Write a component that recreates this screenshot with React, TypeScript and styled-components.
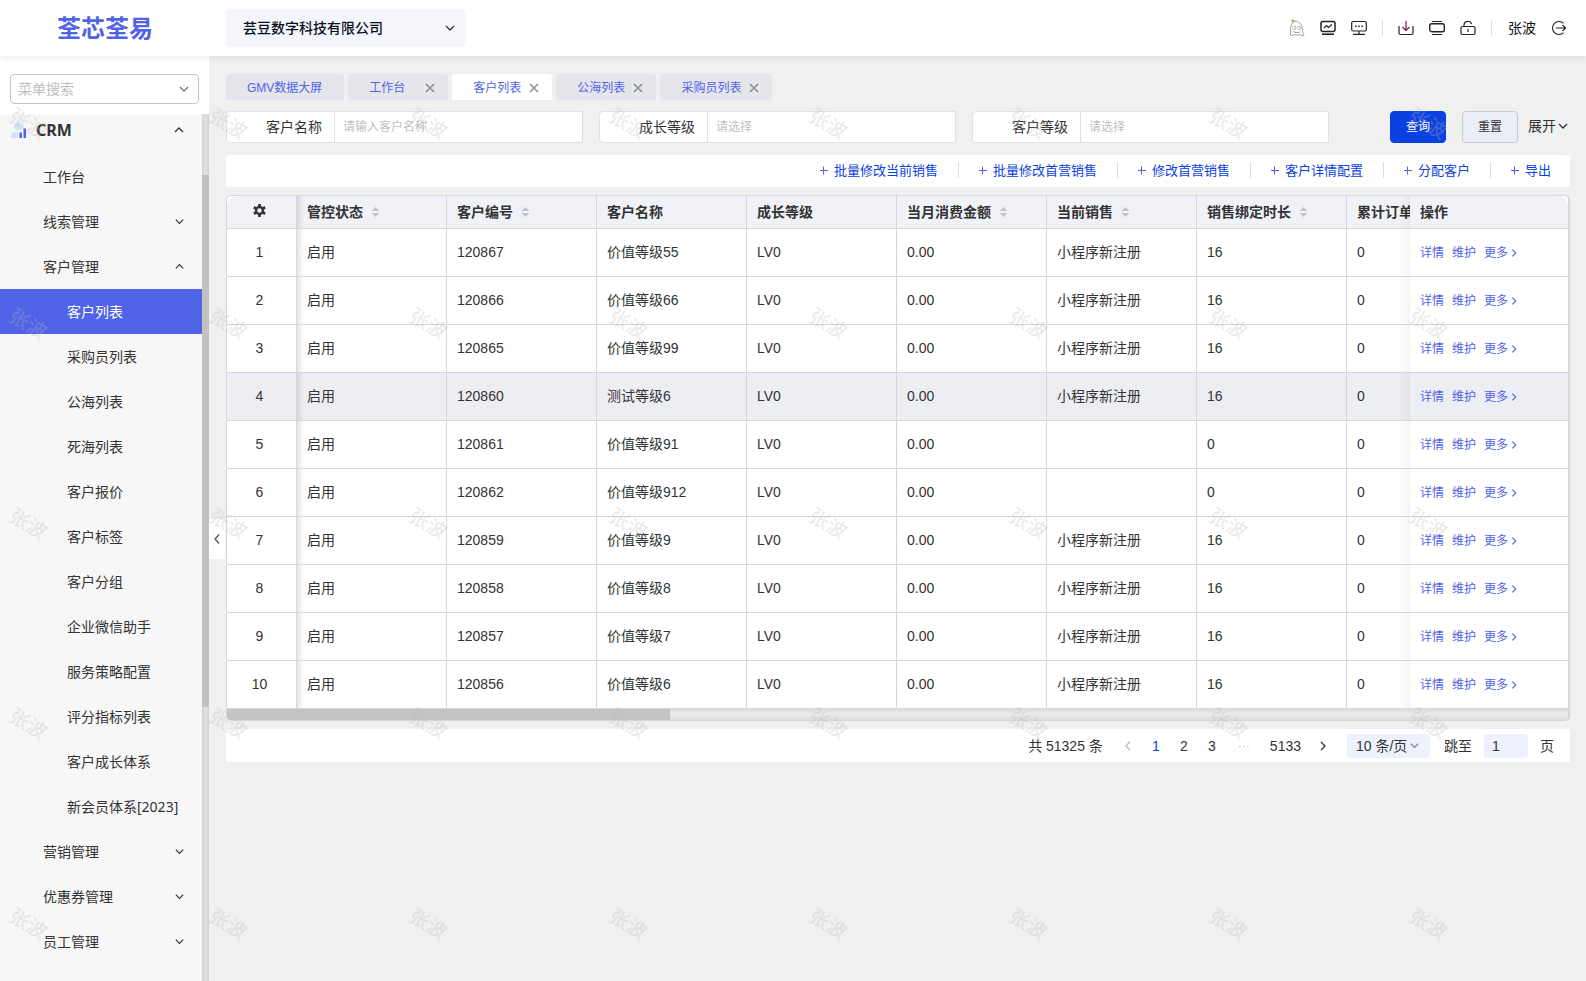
import React from 'react';
import styled, { createGlobalStyle, css } from 'styled-components';

const latin = '"Liberation Sans", "Noto Sans CJK SC", sans-serif';
const ui = '"Noto Sans", "Noto Sans CJK SC", sans-serif';
const brand = '#5062e8';
const link = '#0a42e0';
const line = '#d6d5e2';
const ink = '#333333';

const Global = createGlobalStyle`
  *, *::before, *::after { box-sizing: border-box; }
  body { margin: 0; background: #f0f0f0; color: ${ink}; font: 14px/20px ${ui}; }
  button, input, select { font: inherit; color: inherit; }
  button { border: 0; padding: 0; background: none; cursor: pointer; }
  a { text-decoration: none; color: inherit; }
`;

const Page = styled.div`
  height: 100vh;
  display: flex;
  flex-direction: column;
  overflow: hidden;
`;

/* ---------- header ---------- */
const Header = styled.header`
  flex: none;
  height: 56px;
  display: flex;
  align-items: center;
  background: #fff;
  box-shadow: 0 2px 8px rgba(0, 0, 0, 0.08);
  z-index: 2;
  padding-right: 19px;
`;
const Logo = styled.a`
  width: 226px;
  padding-left: 57px;
  font-size: 24px;
  line-height: 32px;
  font-weight: 700;
  color: ${brand};
`;
const SelectWrap = styled.div`
  position: relative;
  display: flex;
  align-items: center;
  svg { position: absolute; pointer-events: none; }
`;
const CompanyWrap = styled(SelectWrap)`
  width: 240px;
  svg { right: 10px; }
`;
const CompanySelect = styled.select`
  appearance: none;
  width: 100%;
  height: 38px;
  border: 0;
  border-radius: 4px;
  background: #f5f6fb;
  padding: 0 32px 0 17px;
  font-weight: 500;
  color: #0a0f1e;
`;
const HeaderTools = styled.div`
  margin-left: auto;
  display: flex;
  align-items: center;
`;
const IconGroup = styled.div`
  display: flex;
  gap: 15px;
  padding: 0 15px;
  &:not(:last-child) { border-right: 1px solid #dcdde8; }
  height: 16px;
  align-items: center;
`;
const IconButton = styled.button`
  width: 16px;
  height: 16px;
  display: flex;
  align-items: center;
  justify-content: center;
`;
const User = styled.div`
  display: flex;
  align-items: center;
  gap: 15px;
  padding-left: 16px;
  color: #111;
`;

/* ---------- sidebar ---------- */
const Body = styled.div`
  flex: 1;
  min-height: 0;
  display: flex;
`;
const Sidebar = styled.aside`
  flex: none;
  width: 209px;
  display: flex;
  flex-direction: column;
  background: #fff;
`;
const MenuSearch = styled(SelectWrap)`
  flex: none;
  height: 58px;
  padding: 18px 10px 10px;
  svg { right: 19px; top: 27px; }
`;
const MenuSelect = styled.select`
  appearance: none;
  width: 100%;
  height: 30px;
  border: 1px solid #c4c4c4;
  border-radius: 4px;
  background: #fff;
  padding: 0 28px 0 7px;
  color: #bcbec4;
`;
const MenuArea = styled.div`
  flex: 1;
  min-height: 0;
  display: flex;
`;
const Menu = styled.nav`
  flex: 1;
  overflow: hidden;
  background: #f7f7f7;
`;
const MenuTrack = styled.div`
  width: 7px;
  padding-top: 61px;
  background: linear-gradient(90deg, #d2d2d2, #e2e2e2 50%, #d2d2d2);
`;
const MenuThumb = styled.div`
  height: 532px;
  background: #c1c1c1;
`;
const GroupTitle = styled.button`
  width: 100%;
  height: 40px;
  display: flex;
  align-items: center;
  gap: 10px;
  padding: 0 17px 8px 10px;
  font-size: 16px;
  font-weight: 700;
  svg:last-child { margin-left: auto; }
`;
const MenuItem = styled.a<{ $level: number; $active?: boolean }>`
  height: 45px;
  display: flex;
  align-items: center;
  justify-content: space-between;
  padding: 0 17px 0 ${p => (p.$level === 2 ? 67 : 43)}px;
  white-space: nowrap;
  ${p => p.$active && css`background: ${brand}; color: #fff;`}
`;

/* ---------- main ---------- */
const Main = styled.main`
  position: relative;
  flex: 1;
  min-width: 0;
  padding: 18px 16px 16px 17px;
`;
const Collapse = styled.button`
  position: absolute;
  left: 0;
  top: 50%;
  width: 16px;
  height: 40px;
  display: flex;
  align-items: center;
  justify-content: center;
  background: #fff;
`;
const Tabs = styled.div`
  display: flex;
  gap: 4px;
  height: 26px;
`;
const Tab = styled.div<{ $active?: boolean; $closable: boolean }>`
  min-width: 100px;
  display: flex;
  align-items: center;
  justify-content: space-between;
  gap: 8px;
  padding: 2px ${p => (p.$closable ? 13 : 22)}px 0 21px;
  border-radius: 4px 4px 0 0;
  background: ${p => (p.$active ? '#fff' : '#e5e6ec')};
  color: ${brand};
  font: 12px/18px ${latin};
  button { display: flex; }
`;

const SearchRow = styled.form`
  display: flex;
  align-items: center;
  gap: 16px;
  margin-top: 11px;
  height: 32px;
`;
const Field = styled.div`
  flex: 1;
  min-width: 0;
  height: 32px;
  display: flex;
  border: 1px solid #e0e0ec;
  border-radius: 4px 0 0 4px;
  background: #fff;
  label {
    flex: none;
    width: 108px;
    padding-right: 12px;
    border-right: 1px solid #e0e0ec;
    text-align: right;
    line-height: 30px;
  }
  input, select {
    appearance: none;
    flex: 1;
    min-width: 0;
    border: 0;
    background: none;
    padding: 0 8px;
    font-size: 12px;
    color: #bfc0c6;
    outline: none;
  }
  input::placeholder { color: #bfc0c6; opacity: 1; }
`;
const Actions = styled.div`
  flex: none;
  width: 225px;
  display: flex;
  align-items: center;
  justify-content: flex-end;
  gap: 16px;
`;
const Button = styled.button<{ $primary?: boolean }>`
  width: 56px;
  height: 32px;
  border-radius: 4px;
  font-size: 12px;
  border: 1px solid ${p => (p.$primary ? '#0a42e0' : '#c9c9cf')};
  background: ${p => (p.$primary ? '#0a42e0' : '#ebeef7')};
  color: ${p => (p.$primary ? '#fff' : ink)};
`;
const Expand = styled.button`
  display: flex;
  align-items: center;
  gap: 1px;
  margin-left: -6px;
  padding: 0 1px 2px 0;
`;

const Toolbar = styled.div`
  display: flex;
  align-items: center;
  justify-content: flex-end;
  height: 32px;
  margin-top: 12px;
  padding-bottom: 2px;
  border-radius: 4px;
  background: #fff;
`;
const ToolItem = styled.button`
  display: flex;
  align-items: center;
  gap: 5px;
  height: 16px;
  padding: 0 20px 0 19px;
  font-size: 13px;
  color: ${link};
  & + & { border-left: 1px solid #dcdde8; }
  &:last-child { padding-right: 19px; }
`;

const TableBox = styled.div`
  margin-top: 8px;
  border: 1px solid ${line};
  border-right-width: 2px;
  border-radius: 5px;
  background: #fff;
  overflow: hidden;
`;
const TableClip = styled.div`
  overflow: hidden;
`;
const Table = styled.table`
  width: 100%;
  min-width: 1428px;
  table-layout: fixed;
  border-collapse: separate;
  border-spacing: 0;
  font-family: ${latin};
  th, td {
    padding: 0 10px;
    border-right: 1px solid ${line};
    border-bottom: 1px solid ${line};
    text-align: left;
    white-space: nowrap;
    overflow: hidden;
  }
  th {
    height: 33px;
    background: #f0f2f8;
    font-weight: 700;
  }
  td { height: 48px; padding-bottom: 2px; background: #fff; }
  th:first-child { border-top-left-radius: 10px; }
  th:last-child { border-top-right-radius: 10px; }
  th:first-child, td:first-child { text-align: center; padding-left: 0; padding-right: 4px; }
  th:nth-child(2), td:nth-child(2) {
    background-image: linear-gradient(90deg, rgba(0, 0, 0, 0.1), rgba(0, 0, 0, 0) 7px);
  }
  th:last-child, td:last-child {
    position: sticky;
    right: 0;
    border-right: 0;
    overflow: visible;
  }
  td:last-child { padding-bottom: 0; }
  th:last-child::before, td:last-child::before {
    content: '';
    position: absolute;
    top: 0;
    bottom: 0;
    left: -12px;
    width: 12px;
    background: linear-gradient(270deg, rgba(0, 0, 0, 0.04), rgba(0, 0, 0, 0));
  }
`;
const Row = styled.tr<{ $hover?: boolean }>`
  ${p => p.$hover && css`td { background-color: #edeef4; }`}
`;
const HeadLabel = styled.span`
  display: flex;
  align-items: center;
  gap: 8px;
`;
const RowLinks = styled.div`
  display: flex;
  gap: 8px;
  font: 12px/20px ${ui};
  color: ${brand};
  a { display: flex; align-items: center; gap: 1px; }
`;
const ScrollTrack = styled.div`
  height: 11px;
  background: linear-gradient(#dcdce0, #ececec 50%, #dcdce0);
`;
const ScrollThumb = styled.div`
  width: 33%;
  height: 11px;
  background: #c4c4c4;
`;

const Pager = styled.div`
  display: flex;
  align-items: center;
  justify-content: flex-end;
  gap: 4px;
  height: 33px;
  margin-top: 8px;
  padding-right: 16px;
  background: #fff;
  font-family: ${latin};
`;
const Total = styled.span`
  margin-right: 9px;
`;
const PageButton = styled.button<{ $current?: boolean }>`
  min-width: 24px;
  height: 24px;
  padding: 0 6px;
  display: flex;
  align-items: center;
  justify-content: center;
  color: ${p => (p.$current ? link : ink)};
`;
const Dots = styled.span`
  width: 32px;
  text-align: center;
  color: #c4c4c4;
  font-size: 12px;
`;
const SizeWrap = styled(SelectWrap)`
  width: 83px;
  margin: 0 10px 0 8px;
  svg { right: 10px; }
`;
const SizeSelect = styled.select`
  appearance: none;
  width: 100%;
  height: 24px;
  border: 0;
  border-radius: 4px;
  background: #edf1fe;
  padding: 0 0 0 9px;
`;
const Jump = styled.label`
  display: flex;
  align-items: center;
  gap: 12px;
`;
const JumpInput = styled.input`
  width: 44px;
  height: 24px;
  border: 0;
  border-radius: 4px;
  background: #edf1fe;
  padding: 0 10px 0 8px;
`;

/* ---------- watermark ---------- */
const Watermark = styled.div`
  position: fixed;
  inset: 0;
  z-index: 10;
  overflow: hidden;
  pointer-events: none;
  display: grid;
  grid-template-columns: repeat(8, 200px);
  grid-auto-rows: 200px;
`;
const Mark = styled.span`
  padding: 110px 0 0 8px;
  span {
    display: block;
    width: 40px;
    font-size: 20px;
    line-height: 28px;
    font-weight: 500;
    transform: rotate(30deg);
    color: rgba(184, 184, 184, 0.28);
  }
`;

/* ---------- icons ---------- */
type Dir = 'up' | 'down' | 'left' | 'right';
const paths: Record<Dir, string> = {
  down: 'M2 4 6 8 10 4',
  up: 'M2 8 6 4 10 8',
  left: 'M8 1.5 4 6 8 10.5',
  right: 'M4 2 8 6 4 10',
};
const Chevron = ({ dir, size = 12, color = '#333' }: { dir: Dir; size?: number; color?: string }) => (
  <svg width={size} height={size} viewBox="0 0 12 12" fill="none" stroke={color} strokeWidth="1.3" aria-hidden="true">
    <path d={paths[dir]} />
  </svg>
);
const Close = () => (
  <svg width="10" height="10" viewBox="0 0 10 10" stroke="#8c8c90" strokeWidth="1.5" aria-hidden="true">
    <path d="M1 1 9 9M9 1 1 9" />
  </svg>
);
const Plus = () => (
  <svg width="10" height="10" viewBox="0 0 10 10" stroke={brand} strokeWidth="1" aria-hidden="true">
    <path d="M1 5.5H9M4.5 1.5V9.5" />
  </svg>
);
const Sorter = () => (
  <svg width="9" height="12" viewBox="0 0 9 12" fill="#c3c4cb" aria-hidden="true">
    <path d="M4.5 1 8.5 5H.5zM4.500 11 .5 7h8z" />
  </svg>
);
const Gear = () => (
  <svg width="13" height="13" viewBox="0 0 24 24" fill="none" stroke="#333" aria-hidden="true">
    <circle cx="12" cy="12" r="6.5" strokeWidth="4.5" />
    <path strokeWidth="5" d="M12 0V5M12 19v5M1.6 6l4.3 2.5M18.1 15.5l4.3 2.5M1.6 18l4.3-2.5M18.1 8.5l4.3-2.5" />
  </svg>
);
const CrmIcon = () => (
  <svg width="16" height="16" viewBox="0 0 16 16" aria-hidden="true">
    <circle cx="8" cy="4.5" r="4" fill="#d3e3fd" />
    <path d="M1 16v-3a3 3 0 0 1 3-3h4v6z" fill="#d3e3fd" />
    <path d="M9.500 10.500h2.500V16H9.500zM13.500 6.500H16V16h-2.500z" fill="#4a67ea" />
  </svg>
);
const Svg16 = ({ children }: { children: React.ReactNode }) => (
  <svg width="16" height="16" viewBox="0 0 16 16" fill="none" stroke="#222" strokeWidth="1.2" aria-hidden="true">
    {children}
  </svg>
);
const Mascot = () => (
  <svg width="16" height="18" viewBox="0 0 16 18" fill="none" stroke="#a0a0a0" strokeWidth="1" aria-hidden="true">
    <path d="M4 3C2 6 1 9 1.500 12c.5 1 0 3-.5 4 1 1 3 .5 4-.5 2 .8 4 .8 6 0 1 1 3 1.500 4 .5 0-1-1-2-1.500-3.500C14 8 11.500 3.500 8.500 2.500 7 2 5 2 4 3z" />
    <path d="M3.500 8c1-1.500 3.500-1 3.500.5S4.500 11 3.500 9.500M8 8c1.500-1 4-.5 4 1s-2.500 2-3.500.5M4 12.500c2 1.300 5 1.300 7 .5" />
    <path d="M2.500 1 5 2.500" stroke="#f0744a" strokeWidth="1.500" />
  </svg>
);

/* ---------- data ---------- */
const menu: { label: string; level: number; dir?: Dir; active?: boolean }[] = [
  { label: '工作台', level: 1 },
  { label: '线索管理', level: 1, dir: 'down' },
  { label: '客户管理', level: 1, dir: 'up' },
  { label: '客户列表', level: 2, active: true },
  ...['采购员列表', '公海列表', '死海列表', '客户报价', '客户标签', '客户分组', '企业微信助手', '服务策略配置', '评分指标列表', '客户成长体系', '新会员体系[2023]'].map(
    label => ({ label, level: 2 })
  ),
  { label: '营销管理', level: 1, dir: 'down' },
  { label: '优惠券管理', level: 1, dir: 'down' },
  { label: '员工管理', level: 1, dir: 'down' },
];
const tabs = [
  { label: 'GMV数据大屏', closable: false },
  { label: '工作台', closable: true },
  { label: '客户列表', closable: true, active: true },
  { label: '公海列表', closable: true },
  { label: '采购员列表', closable: true },
];
const tools = ['批量修改当前销售', '批量修改首营销售', '修改首营销售', '客户详情配置', '分配客户', '导出'];
const columns = [
  { label: '管控状态', sort: true },
  { label: '客户编号', sort: true },
  { label: '客户名称' },
  { label: '成长等级' },
  { label: '当月消费金额', sort: true },
  { label: '当前销售', sort: true },
  { label: '销售绑定时长', sort: true },
  { label: '累计订单' },
];
const sales = '小程序新注册';
const rows: [string, string, string, string][] = [
  ['120867', '价值等级55', sales, '16'],
  ['120866', '价值等级66', sales, '16'],
  ['120865', '价值等级99', sales, '16'],
  ['120860', '测试等级6', sales, '16'],
  ['120861', '价值等级91', '', '0'],
  ['120862', '价值等级912', '', '0'],
  ['120859', '价值等级9', sales, '16'],
  ['120858', '价值等级8', sales, '16'],
  ['120857', '价值等级7', sales, '16'],
  ['120856', '价值等级6', sales, '16'],
];

export default function App() {
  return (
    <Page>
      <Global />
      <Header>
        <Logo href="#">荃芯荃易</Logo>
        <CompanyWrap>
          <CompanySelect aria-label="公司">
            <option>芸豆数字科技有限公司</option>
          </CompanySelect>
          <Chevron dir="down" />
        </CompanyWrap>
        <HeaderTools>
          <IconGroup>
            <IconButton aria-label="助手"><Mascot /></IconButton>
            <IconButton aria-label="数据">
              <Svg16>
                <rect x="1" y="1.500" width="14" height="10" rx="2" strokeWidth="1.500" />
                <path d="M4 8 6.500 5.500 8.500 7.500 12 4.500" />
                <path d="M2 14.200H14" strokeWidth="1.600" />
              </Svg16>
            </IconButton>
            <IconButton aria-label="消息">
              <Svg16>
                <rect x=".7" y="1.500" width="14.600" height="9.500" rx="1.500" />
                <path d="M8 11v3M2 14.300H14" />
                <path d="M4 6.300h1.500M7.200 6.300h1.500M10.500 6.300h1.500" strokeWidth="1.500" />
              </Svg16>
            </IconButton>
          </IconGroup>
          <IconGroup>
            <IconButton aria-label="下载">
              <Svg16>
                <path d="M1 6v7a1.500 1.500 0 0 0 1.500 1.500h11A1.500 1.500 0 0 0 15 13V6" />
                <path d="M8 1v9.500M4.500 7 8 10.500 11.500 7" stroke="#7a1750" />
              </Svg16>
            </IconButton>
            <IconButton aria-label="大屏">
              <Svg16>
                <path d="M3 1.500h10M3 14.500h10" />
                <rect x=".7" y="3.700" width="14.600" height="8" rx="2" strokeWidth="1.400" />
              </Svg16>
            </IconButton>
            <IconButton aria-label="锁屏">
              <Svg16>
                <rect x="1" y="6.500" width="14" height="8" rx="1.500" />
                <path d="M4 6.500V5a3.800 3.800 0 0 1 7.500-.8M8 9v3" />
              </Svg16>
            </IconButton>
          </IconGroup>
          <User>
            张波
            <IconButton aria-label="退出">
              <Svg16>
                <path d="M12.500 3.300a6.500 6.500 0 1 0 0 9.400M5 8h10M11.500 5l3.200 3-3.200 3" strokeWidth="1.100" />
              </Svg16>
            </IconButton>
          </User>
        </HeaderTools>
      </Header>

      <Body>
        <Sidebar>
          <MenuSearch>
            <MenuSelect aria-label="菜单搜索">
              <option>菜单搜索</option>
            </MenuSelect>
            <Chevron dir="down" color="#777" />
          </MenuSearch>
          <MenuArea>
            <Menu>
              <GroupTitle><CrmIcon />CRM<Chevron dir="up" /></GroupTitle>
              {menu.map(m => (
                <MenuItem key={m.label} href="#" $level={m.level} $active={m.active}>
                  {m.label}
                  {m.dir && <Chevron dir={m.dir} size={11} />}
                </MenuItem>
              ))}
            </Menu>
            <MenuTrack><MenuThumb /></MenuTrack>
          </MenuArea>
        </Sidebar>

        <Main>
          <Collapse aria-label="收起菜单"><Chevron dir="left" color="#555" /></Collapse>
          <Tabs>
            {tabs.map(t => (
              <Tab key={t.label} $active={t.active} $closable={t.closable}>
                <a href="#">{t.label}</a>
                {t.closable && <button aria-label={`关闭${t.label}`}><Close /></button>}
              </Tab>
            ))}
          </Tabs>

          <SearchRow onSubmit={e => e.preventDefault()}>
            <Field>
              <label htmlFor="name">客户名称</label>
              <input id="name" placeholder="请输入客户名称" />
            </Field>
            <Field>
              <label htmlFor="growth">成长等级</label>
              <select id="growth"><option>请选择</option></select>
            </Field>
            <Field>
              <label htmlFor="level">客户等级</label>
              <select id="level"><option>请选择</option></select>
            </Field>
            <Actions>
              <Button $primary type="submit">查询</Button>
              <Button type="reset">重置</Button>
              <Expand type="button">展开<Chevron dir="down" /></Expand>
            </Actions>
          </SearchRow>

          <Toolbar>
            {tools.map(t => (
              <ToolItem key={t}><Plus />{t}</ToolItem>
            ))}
          </Toolbar>

          <TableBox>
            <TableClip>
              <Table>
                <colgroup>
                  <col style={{ width: 70 }} />
                  {columns.map(c => <col key={c.label} style={{ width: 150 }} />)}
                  <col style={{ width: 158 }} />
                </colgroup>
                <thead>
                  <tr>
                    <th aria-label="设置"><Gear /></th>
                    {columns.map(c => (
                      <th key={c.label}><HeadLabel>{c.label}{c.sort && <Sorter />}</HeadLabel></th>
                    ))}
                    <th>操作</th>
                  </tr>
                </thead>
                <tbody>
                  {rows.map(([id, name, seller, days], i) => (
                    <Row key={id} $hover={i === 3}>
                      <td>{i + 1}</td>
                      <td>启用</td>
                      <td>{id}</td>
                      <td>{name}</td>
                      <td>LV0</td>
                      <td>0.00</td>
                      <td>{seller}</td>
                      <td>{days}</td>
                      <td>0</td>
                      <td>
                        <RowLinks>
                          <a href="#">详情</a>
                          <a href="#">维护</a>
                          <a href="#">更多<Chevron dir="right" size={10} color={brand} /></a>
                        </RowLinks>
                      </td>
                    </Row>
                  ))}
                </tbody>
              </Table>
            </TableClip>
            <ScrollTrack><ScrollThumb /></ScrollTrack>
          </TableBox>

          <Pager>
            <Total>共 51325 条</Total>
            <PageButton aria-label="上一页"><Chevron dir="left" color="#bbb" size={12} /></PageButton>
            <PageButton $current>1</PageButton>
            <PageButton>2</PageButton>
            <PageButton>3</PageButton>
            <Dots>···</Dots>
            <PageButton>5133</PageButton>
            <PageButton aria-label="下一页"><Chevron dir="right" size={12} /></PageButton>
            <SizeWrap>
              <SizeSelect aria-label="每页条数"><option>10 条/页</option></SizeSelect>
              <Chevron dir="down" color="#777" size={11} />
            </SizeWrap>
            <Jump>跳至<JumpInput defaultValue="1" />页</Jump>
          </Pager>
        </Main>
      </Body>

      <Watermark aria-hidden="true">
        {Array.from({ length: 40 }, (_, i) => <Mark key={i}><span>张波</span></Mark>)}
      </Watermark>
    </Page>
  );
}
